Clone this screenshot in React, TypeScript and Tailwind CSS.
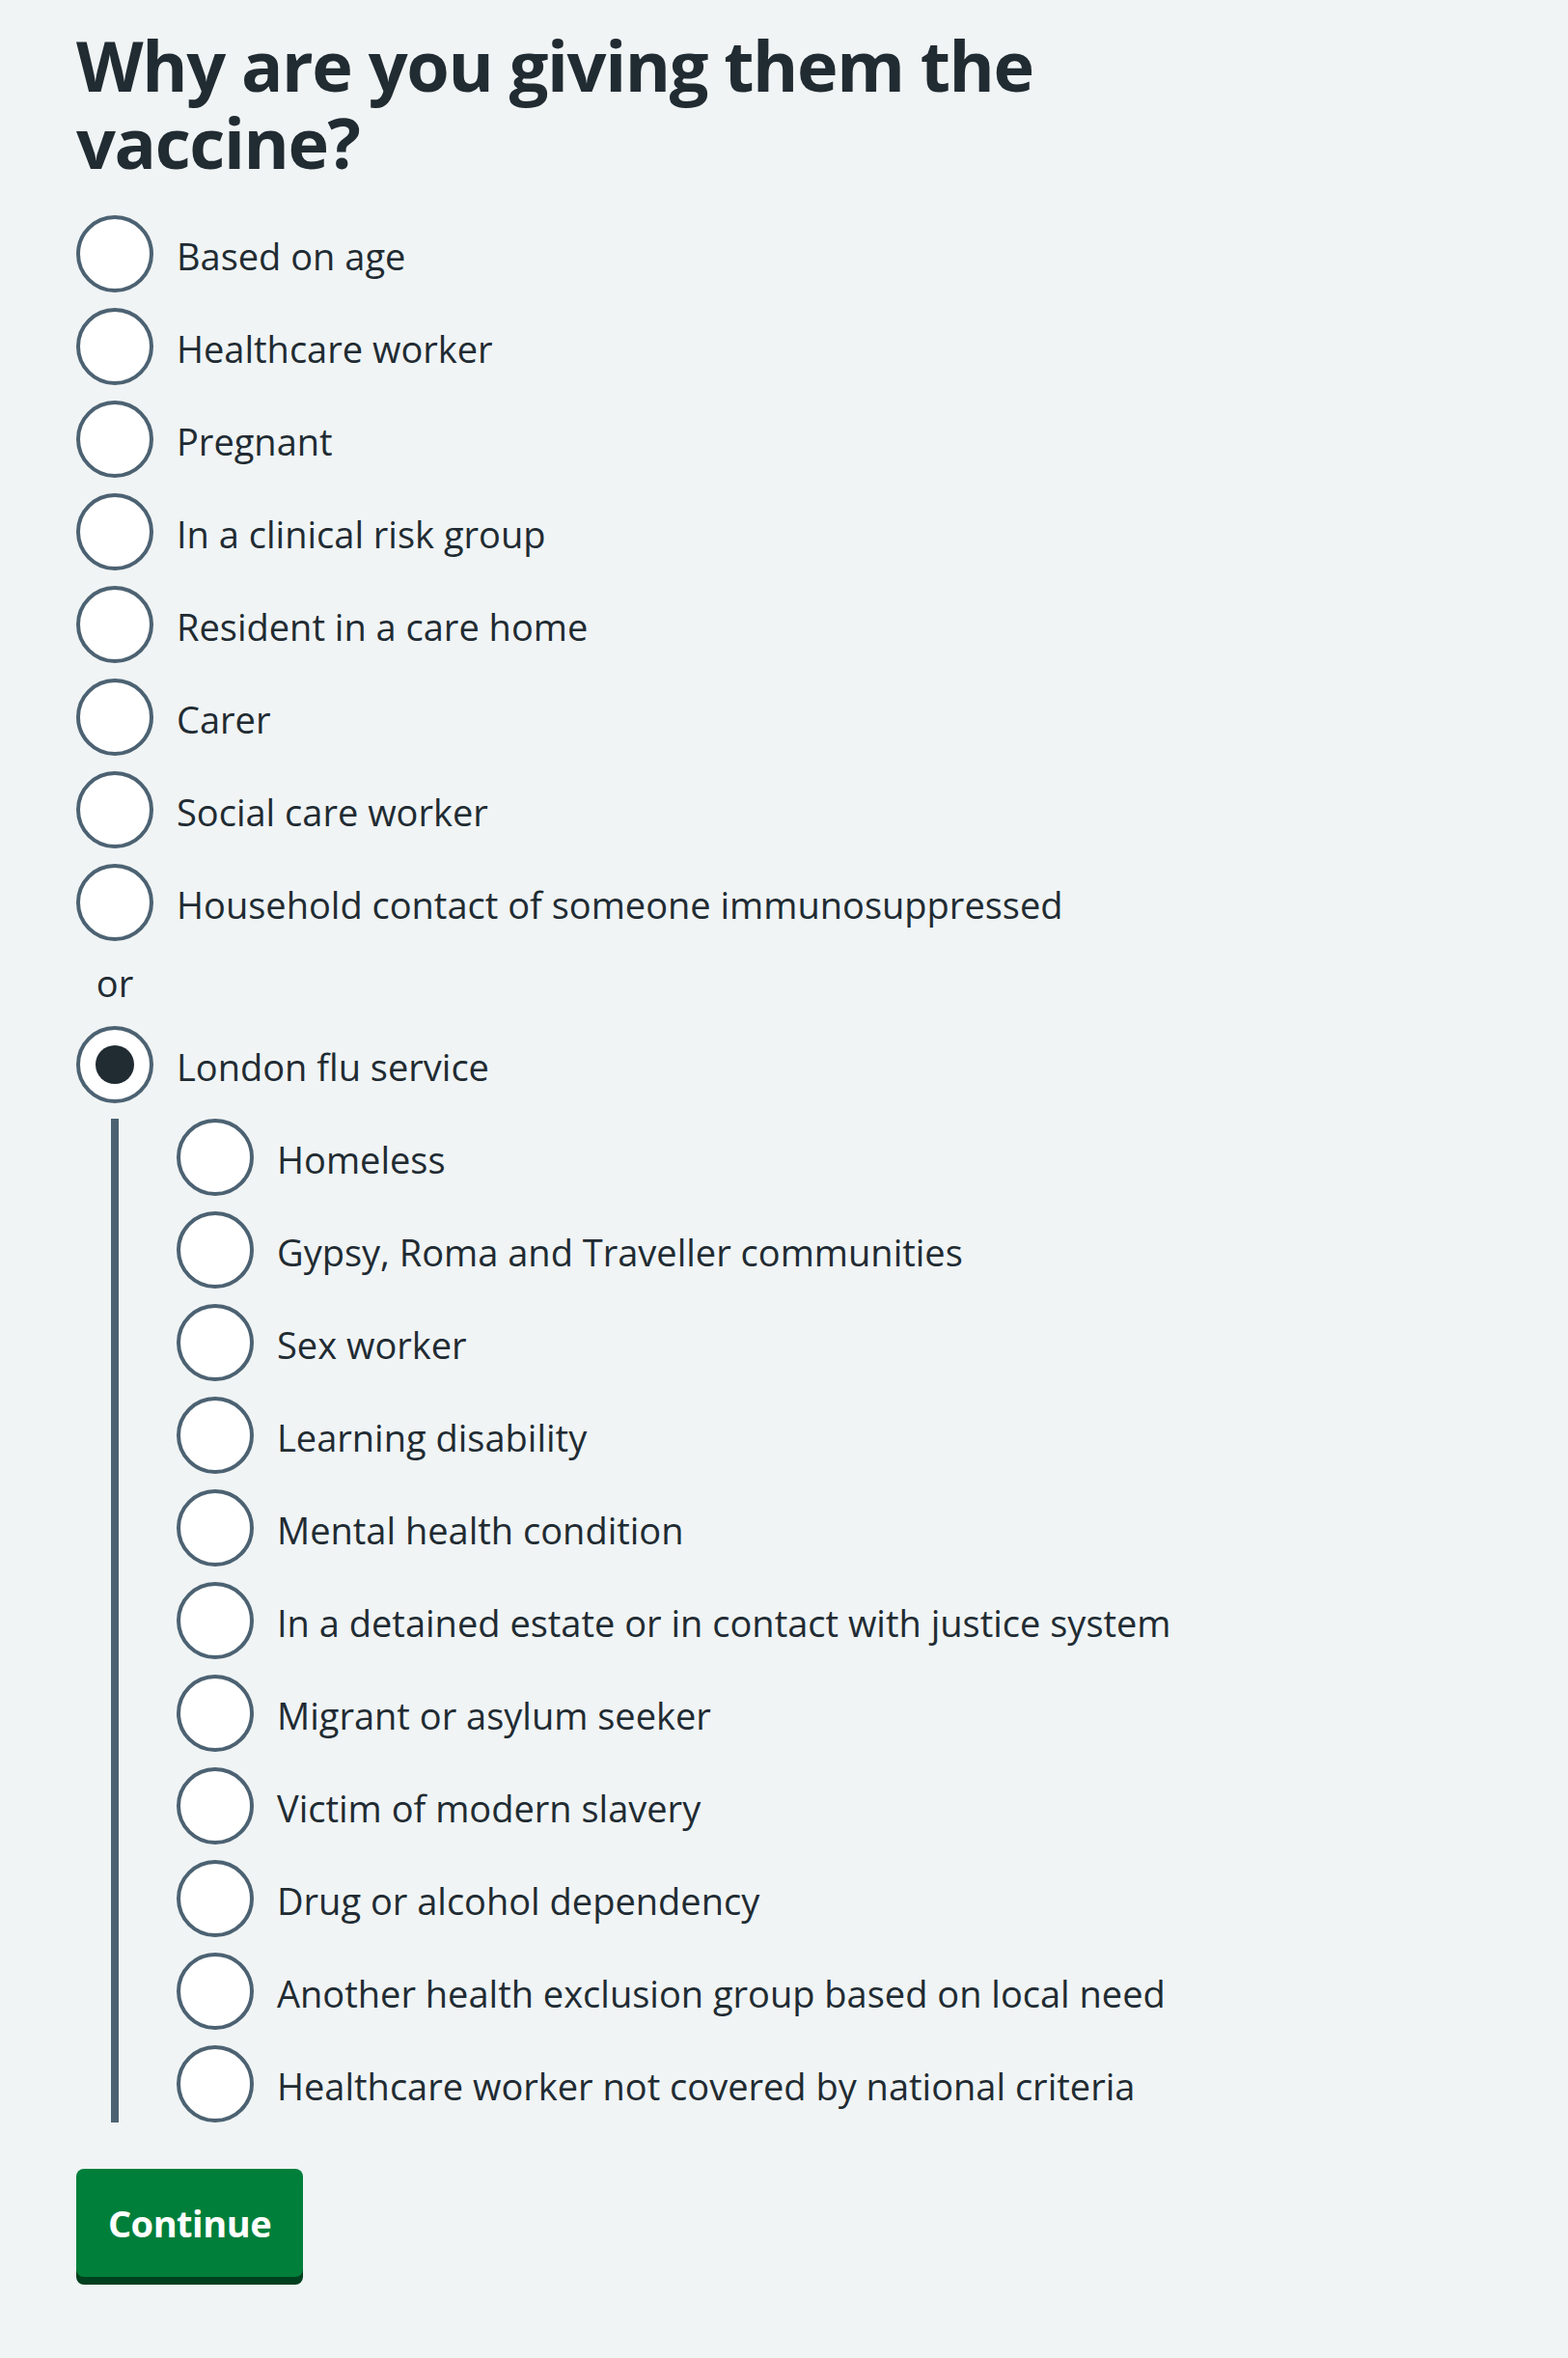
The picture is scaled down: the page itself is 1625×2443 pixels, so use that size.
const mainOptions = [
  "Based on age",
  "Healthcare worker",
  "Pregnant",
  "In a clinical risk group",
  "Resident in a care home",
  "Carer",
  "Social care worker",
  "Household contact of someone immunosuppressed",
];

const londonOptions = [
  "Homeless",
  "Gypsy, Roma and Traveller communities",
  "Sex worker",
  "Learning disability",
  "Mental health condition",
  "In a detained estate or in contact with justice system",
  "Migrant or asylum seeker",
  "Victim of modern slavery",
  "Drug or alcohol dependency",
  "Another health exclusion group based on local need",
  "Healthcare worker not covered by national criteria",
];

function Radio({ label, checked = false }: { label: string; checked?: boolean }) {
  return (
    <label className="flex items-start">
      <span className="flex h-20 w-20 shrink-0 items-center justify-center rounded-full border-4 border-[#4c6272] bg-white">
        {checked && <span className="h-10 w-10 rounded-full bg-[#212b32]" />}
      </span>
      <span className="pl-6 pt-[14px] pb-[10px] text-[38px] leading-[56px]">{label}</span>
    </label>
  );
}

export default function App() {
  return (
    <div
      className="min-h-screen bg-[#f0f4f5] pl-[79px] pt-[27px] pb-[76px] text-[#212b32]"
      style={{ fontFamily: '"Open Sans", "Noto Sans", sans-serif' }}
    >
      <h1 className="mb-[36px] max-w-[1100px] text-[72px] font-bold leading-[80px] tracking-[-1.4px]">
        Why are you giving them the vaccine?
      </h1>

      <div className="flex flex-col gap-4">
        {mainOptions.map((o) => (
          <Radio key={o} label={o} />
        ))}
        <p className="w-20 pb-[2px] text-center text-[38px] leading-[54px]">or</p>
        <Radio label="London flu service" checked />
        <div className="ml-9 flex flex-col gap-4 border-l-8 border-[#4c6272] pl-[60px]">
          {londonOptions.map((o) => (
            <Radio key={o} label={o} />
          ))}
        </div>
      </div>

      <button className="mt-12 h-[112px] w-[235px] rounded-lg bg-[#007f3b] text-[38px] font-bold leading-[56px] tracking-[-0.5px] text-white shadow-[0_8px_0_#00401e]">
        Continue
      </button>
    </div>
  );
}
